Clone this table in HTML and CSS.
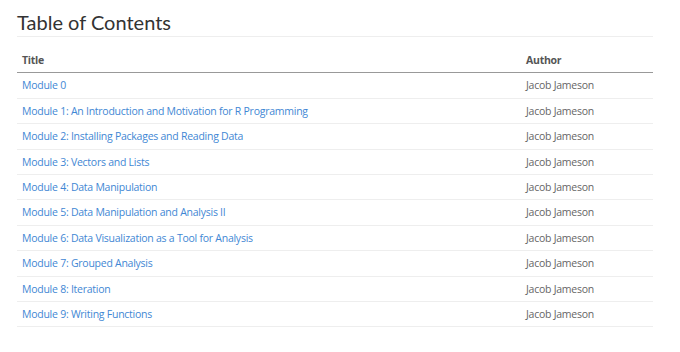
FILE: index.html
```html
<!DOCTYPE html>
<html lang="en">

<head>
  <meta charset="UTF-8">
  <meta name="viewport" content="width=device-width, initial-scale=1.0">
  <title>Table of Contents</title>
  <link rel="stylesheet" href="styles.css">
</head>

<body>
  <div class="toc">
    <h1 class="toc-title">Table of Contents</h1>
    <table class="toc-table">
      <thead>
        <tr>
          <th>Title</th>
          <th class="author-col">Author</th>
        </tr>
      </thead>
      <tbody>
        <tr>
          <td><a href="#">Module 0</a></td>
          <td>Jacob Jameson</td>
        </tr>
        <tr>
          <td><a href="#">Module 1: An Introduction and Motivation for R Programming</a></td>
          <td>Jacob Jameson</td>
        </tr>
        <tr>
          <td><a href="#">Module 2: Installing Packages and Reading Data</a></td>
          <td>Jacob Jameson</td>
        </tr>
        <tr>
          <td><a href="#">Module 3: Vectors and Lists</a></td>
          <td>Jacob Jameson</td>
        </tr>
        <tr>
          <td><a href="#">Module 4: Data Manipulation</a></td>
          <td>Jacob Jameson</td>
        </tr>
        <tr>
          <td><a href="#">Module 5: Data Manipulation and Analysis II</a></td>
          <td>Jacob Jameson</td>
        </tr>
        <tr>
          <td><a href="#">Module 6: Data Visualization as a Tool for Analysis</a></td>
          <td>Jacob Jameson</td>
        </tr>
        <tr>
          <td><a href="#">Module 7: Grouped Analysis</a></td>
          <td>Jacob Jameson</td>
        </tr>
        <tr>
          <td><a href="#">Module 8: Iteration</a></td>
          <td>Jacob Jameson</td>
        </tr>
        <tr>
          <td><a href="#">Module 9: Writing Functions</a></td>
          <td>Jacob Jameson</td>
        </tr>
      </tbody>
    </table>
  </div>
</body>

</html>
```

FILE: styles.css
```css
body {
  margin: 0;
  font-family: "Open Sans", Arial, sans-serif;
  background: #ffffff;
}

.toc {
  padding: 10px 27px 0 17px;
}

.toc-title {
  font-family: Lato, "Open Sans", sans-serif;
  font-weight: 400;
  font-size: 20px;
  line-height: 24px;
  color: #333333;
  margin: 0 0 11px 0;
  padding-bottom: 2px;
  border-bottom: 1px solid #eeeeee;
}

.toc-table {
  width: 100%;
  border-collapse: collapse;
  font-size: 10.5px;
  line-height: 14.4px;
  letter-spacing: -0.25px;
}

th,
td {
  padding: 5px;
  text-align: left;
}

th {
  color: #555555;
  font-weight: 700;
  border-bottom: 1px solid #999999;
}

td {
  color: #666666;
  border-bottom: 1px solid #eeeeee;
}

.author-col {
  width: 122px;
}

td a {
  color: #3f87d4;
  text-decoration: none;
}
```
